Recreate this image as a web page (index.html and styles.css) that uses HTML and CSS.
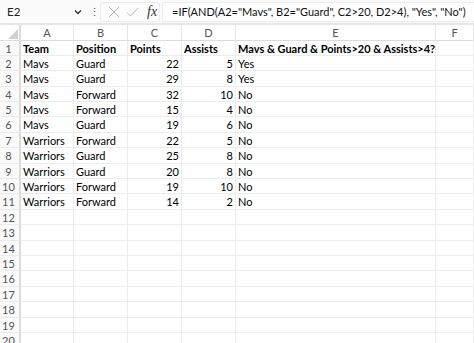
FILE: index.html
```html
<!DOCTYPE html>
<html>
<head>
<meta charset="utf-8">
<link rel="stylesheet" href="styles.css">
</head>
<body>
<div class="fbar">
  <div class="namebox"><span class="ref">E2</span>
    <svg class="chev" width="8" height="6" viewBox="0 0 8 6"><path d="M1 1.5 L4 4.5 L7 1.5" fill="none" stroke="#333" stroke-width="1.4"/></svg>
  </div>
  <div class="dots">⋮</div>
  <div class="btns">
    <svg width="12" height="12" viewBox="0 0 12 12"><path d="M1 1 L11 11 M11 1 L1 11" stroke="#b8b8b8" stroke-width="1"/></svg>
    <svg width="13" height="12" viewBox="0 0 13 12"><path d="M1 6.5 L4.5 10 L12 2" fill="none" stroke="#b8b8b8" stroke-width="1"/></svg>
    <span class="fx">fx</span>
  </div>
  <div class="formula">=IF(AND(A2="Mavs", B2="Guard", C2&gt;20, D2&gt;4), "Yes", "No")</div>
</div>
<div class="sheet">
  <div class="corner"></div><div class="ch">A</div><div class="ch">B</div><div class="ch">C</div><div class="ch">D</div><div class="ch">E</div><div class="ch">F</div>

  <div class="rh">1</div><div class="c b">Team</div><div class="c b">Position</div><div class="c b">Points</div><div class="c b">Assists</div><div class="c b">Mavs &amp; Guard &amp; Points&gt;20 &amp; Assists&gt;4?</div><div class="c"></div>
  <div class="rh">2</div><div class="c">Mavs</div><div class="c">Guard</div><div class="c n">22</div><div class="c n">5</div><div class="c">Yes</div><div class="c"></div>
  <div class="rh">3</div><div class="c">Mavs</div><div class="c">Guard</div><div class="c n">29</div><div class="c n">8</div><div class="c">Yes</div><div class="c"></div>
  <div class="rh">4</div><div class="c">Mavs</div><div class="c">Forward</div><div class="c n">32</div><div class="c n">10</div><div class="c">No</div><div class="c"></div>
  <div class="rh">5</div><div class="c">Mavs</div><div class="c">Forward</div><div class="c n">15</div><div class="c n">4</div><div class="c">No</div><div class="c"></div>
  <div class="rh">6</div><div class="c">Mavs</div><div class="c">Guard</div><div class="c n">19</div><div class="c n">6</div><div class="c">No</div><div class="c"></div>
  <div class="rh">7</div><div class="c">Warriors</div><div class="c">Forward</div><div class="c n">22</div><div class="c n">5</div><div class="c">No</div><div class="c"></div>
  <div class="rh">8</div><div class="c">Warriors</div><div class="c">Guard</div><div class="c n">25</div><div class="c n">8</div><div class="c">No</div><div class="c"></div>
  <div class="rh">9</div><div class="c">Warriors</div><div class="c">Guard</div><div class="c n">20</div><div class="c n">8</div><div class="c">No</div><div class="c"></div>
  <div class="rh">10</div><div class="c">Warriors</div><div class="c">Forward</div><div class="c n">19</div><div class="c n">10</div><div class="c">No</div><div class="c"></div>
  <div class="rh">11</div><div class="c">Warriors</div><div class="c">Forward</div><div class="c n">14</div><div class="c n">2</div><div class="c">No</div><div class="c"></div>
  <div class="rh">12</div><div class="c"></div><div class="c"></div><div class="c"></div><div class="c"></div><div class="c"></div><div class="c"></div>
  <div class="rh">13</div><div class="c"></div><div class="c"></div><div class="c"></div><div class="c"></div><div class="c"></div><div class="c"></div>
  <div class="rh">14</div><div class="c"></div><div class="c"></div><div class="c"></div><div class="c"></div><div class="c"></div><div class="c"></div>
  <div class="rh">15</div><div class="c"></div><div class="c"></div><div class="c"></div><div class="c"></div><div class="c"></div><div class="c"></div>
  <div class="rh">16</div><div class="c"></div><div class="c"></div><div class="c"></div><div class="c"></div><div class="c"></div><div class="c"></div>
  <div class="rh">17</div><div class="c"></div><div class="c"></div><div class="c"></div><div class="c"></div><div class="c"></div><div class="c"></div>
  <div class="rh">18</div><div class="c"></div><div class="c"></div><div class="c"></div><div class="c"></div><div class="c"></div><div class="c"></div>
  <div class="rh">19</div><div class="c"></div><div class="c"></div><div class="c"></div><div class="c"></div><div class="c"></div><div class="c"></div>
  <div class="rh">20</div><div class="c"></div><div class="c"></div><div class="c"></div><div class="c"></div><div class="c"></div><div class="c"></div>
</div>
</body>
</html>
```

FILE: styles.css
```css
html, body {
  margin: 0;
  padding: 0;
  background: #ffffff;
  overflow: hidden;
}
body {
  width: 474px;
  height: 343px;
  font-family: Lato, "Liberation Sans", sans-serif;
  color: #000;
}
.fbar {
  height: 25px;
  box-sizing: border-box;
  display: flex;
  align-items: center;
  background: #fbfbfb;
  border-bottom: 2px solid #e6e6e6;
}
.namebox {
  width: 88px;
  height: 22px;
  box-sizing: border-box;
  display: flex;
  align-items: center;
  justify-content: space-between;
  padding: 0 6px 0 7px;
  font-size: 11.5px;
  color: #222;
}
.dots {
  width: 12px;
  text-align: center;
  font-size: 11px;
  color: #555;
}
.btns {
  width: 60px;
  height: 20px;
  box-sizing: border-box;
  display: flex;
  align-items: center;
  gap: 6px;
  padding-left: 7px;
  border: 1px solid #ececec;
  border-radius: 3px;
  background: #fdfdfd;
}
.fx {
  font-family: "Liberation Serif", serif;
  font-style: italic;
  font-size: 14px;
  color: #333;
  margin-left: 2px;
}
.formula {
  flex: 1;
  height: 20px;
  box-sizing: border-box;
  margin-left: 2px;
  padding-left: 9px;
  display: flex;
  align-items: center;
  font-size: 11px;
  color: #111;
  background: #fff;
  border: 1px solid #ececec;
  border-right: none;
  border-radius: 3px 0 0 3px;
  white-space: nowrap;
}
.sheet {
  display: grid;
  grid-template-columns: 21px 53px 54px 54px 54px 200px 1fr;
  grid-template-rows: 15.5px;
  grid-auto-rows: 15.4px;
  font-size: 11px;
}
.corner {
  position: relative;
  border-right: 2px solid #dcdcdc;
  border-bottom: 1px solid #dcdcdc;
  box-sizing: border-box;
}
.corner::after {
  content: "";
  position: absolute;
  right: 1px;
  bottom: 1px;
  width: 0;
  height: 0;
  border-left: 10px solid transparent;
  border-bottom: 10px solid #d0d0d0;
}
.ch {
  text-align: center;
  line-height: 15px;
  color: #555;
  font-size: 11px;
  border-right: 1px solid #e6e6e6;
  border-bottom: 1px solid #dcdcdc;
  box-sizing: border-box;
}
.rh {
  text-align: center;
  padding-right: 2px;
  line-height: 15px;
  color: #555;
  font-size: 11px;
  border-right: 2px solid #dcdcdc;
  border-bottom: 1px solid #eaeaea;
  box-sizing: border-box;
  background: #fafafa;
}
.c {
  line-height: 15px;
  padding: 0 2px;
  white-space: nowrap;
  border-right: 1px solid #ececec;
  border-bottom: 1px solid #ececec;
  box-sizing: border-box;
  overflow: visible;
}
.b {
  font-weight: bold;
}
.n {
  text-align: right;
}
```
